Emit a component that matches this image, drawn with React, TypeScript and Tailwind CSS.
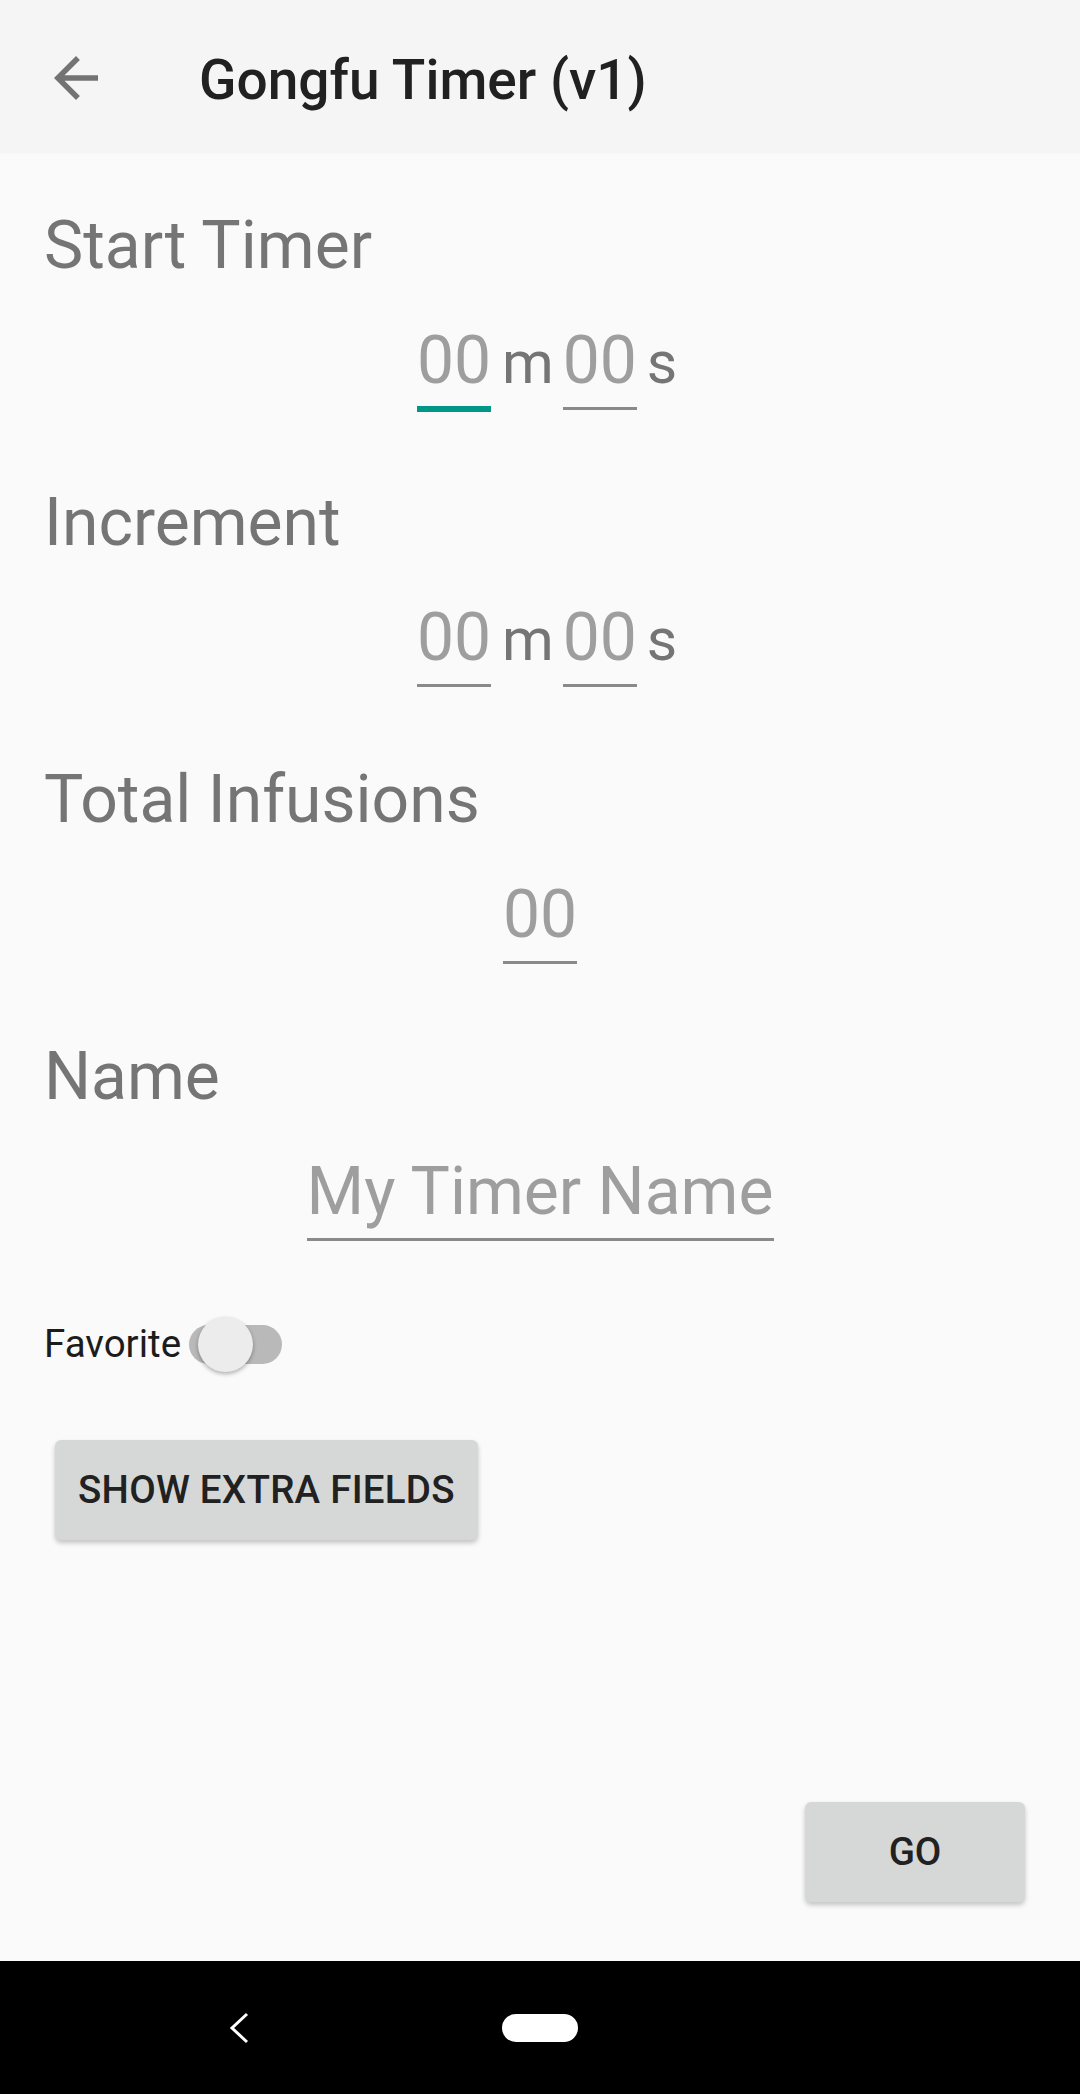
import React from "react";

function Field({ w, focused = false, text }: { w: number; focused?: boolean; text: string }) {
  return (
    <div className="flex flex-col" style={{ width: w }}>
      <div className="text-[66px] leading-[77px] text-[#9e9e9e] text-center whitespace-nowrap">{text}</div>
      <div className="mt-[7px] h-[6px]">
        {focused ? (
          <div className="h-[6px] bg-[#009688]" />
        ) : (
          <div className="mt-[1px] h-[3px] bg-[#8a8a8a]" />
        )}
      </div>
    </div>
  );
}

function TimeRow({ focusFirst = false }: { focusFirst?: boolean }) {
  return (
    <div className="mt-[38px] flex items-baseline justify-center pl-[14px]">
      <Field w={74} focused={focusFirst} text="00" />
      <span className="ml-[11px] mr-[9px] text-[59px] leading-[77px] text-[#757575]">m</span>
      <Field w={74} text="00" />
      <span className="ml-[10px] text-[59px] leading-[77px] text-[#757575]">s</span>
    </div>
  );
}

function Label({ children, mt }: { children: React.ReactNode; mt: string }) {
  return <div className={`${mt} pl-[44px] text-[66px] leading-[77px] text-[#757575]`}>{children}</div>;
}

export default function App() {
  return (
    <div className="w-[1080px] h-[2094px] flex flex-col font-[Roboto] bg-[#fafafa]">
      <header className="h-[153px] shrink-0 bg-[#f5f5f5] flex items-center">
        <svg className="ml-[43px] mt-[2px]" width="66" height="66" viewBox="0 0 24 24">
          <path fill="#737373" d="M20 11H7.83l5.59-5.59L12 4l-8 8 8 8 1.41-1.41L7.83 13H20v-2z" />
        </svg>
        <div className="ml-[90px] mt-[8px] text-[55px] font-medium text-[#212121] leading-none">Gongfu Timer (v1)</div>
      </header>

      <main className="flex-1 flex flex-col">
        <div className="mt-[54px] text-[66px] leading-[77px] text-[#757575] pl-[44px]">Start Timer</div>
        <TimeRow focusFirst />

        <Label mt="mt-[72px]">Increment</Label>
        <TimeRow />

        <Label mt="mt-[72px]">Total Infusions</Label>
        <div className="mt-[38px] flex justify-center">
          <Field w={74} text="00" />
        </div>

        <Label mt="mt-[72px]">Name</Label>
        <div className="mt-[38px] flex justify-center">
          <Field w={467} text="My Timer Name" />
        </div>

        <div className="mt-[68px] h-[66px] flex items-center pl-[44px]">
          <span className="text-[38.5px] text-[#1c1c1c]">Favorite</span>
          <div className="relative ml-[8px] w-[93px] h-[55px]">
            <div className="absolute left-0 right-0 top-[8px] h-[39px] rounded-full bg-[#b9b9b9]" />
            <div className="absolute left-[9px] top-0 w-[55px] h-[55px] rounded-full bg-[#ececec] shadow-[0_2px_4px_rgba(0,0,0,0.3)]" />
          </div>
        </div>

        <div className="mt-[63px] pl-[55px] flex">
          <button className="h-[100px] px-[23px] rounded-[6px] bg-[#d6d7d7] text-[38.5px] font-medium tracking-[0.25px] text-[#212121] shadow-[0_3px_5px_rgba(0,0,0,0.22)] flex items-center">
            SHOW EXTRA FIELDS
          </button>
        </div>

        <div className="mt-auto mb-[59px] pr-[55px] flex justify-end">
          <button className="w-[220px] h-[100px] rounded-[6px] bg-[#d6d7d7] text-[38.5px] font-medium text-[#212121] shadow-[0_3px_5px_rgba(0,0,0,0.22)] flex items-center justify-center">
            GO
          </button>
        </div>
      </main>

      <nav className="h-[133px] shrink-0 bg-black flex items-center">
        <svg className="ml-[226px]" width="26" height="32" viewBox="0 0 26 32">
          <polyline points="21,2 6,16 21,30" fill="none" stroke="white" strokeWidth="3" />
        </svg>
        <div className="ml-[250px] w-[76px] h-[28px] rounded-full bg-white" />
      </nav>
    </div>
  );
}
